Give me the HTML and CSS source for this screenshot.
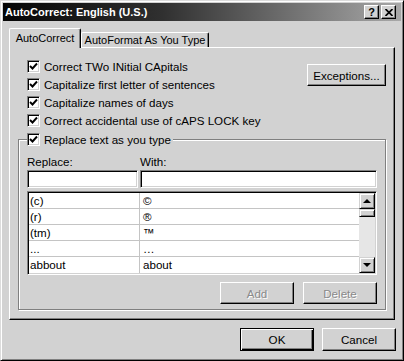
FILE: index.html
```html
<!DOCTYPE html>
<html>
<head>
    <title>AutoCorrect: English (U.S.)</title>
    <link rel="stylesheet" href="styles.css">
</head>
<body>
    <div class="window">
        <div class="titlebar">
            <span class="title">AutoCorrect: English (U.S.)</span>
            <div class="caption-buttons">
                <span class="caption-btn help">?</span>
                <span class="caption-btn">
                    <svg width="8" height="7" viewBox="0 0 8 7"><path d="M0.5 0 L7.5 7 M7.5 0 L0.5 7" stroke="#000" stroke-width="1.7"/></svg>
                </span>
            </div>
        </div>

        <div class="tabs">
            <div class="tab active">AutoCorrect</div>
            <div class="tab">AutoFormat As You Type</div>
        </div>

        <div class="panel">
            <div class="options">
                <div class="checks">
                    <div class="check"><span class="box"><svg width="9" height="9" viewBox="0 0 9 9"><polyline points="1,4 3.5,6.5 8,1.5" fill="none" stroke="#000" stroke-width="1.9"/></svg></span>Correct TWo INitial CApitals</div>
                    <div class="check"><span class="box"><svg width="9" height="9" viewBox="0 0 9 9"><polyline points="1,4 3.5,6.5 8,1.5" fill="none" stroke="#000" stroke-width="1.9"/></svg></span>Capitalize first letter of sentences</div>
                    <div class="check"><span class="box"><svg width="9" height="9" viewBox="0 0 9 9"><polyline points="1,4 3.5,6.5 8,1.5" fill="none" stroke="#000" stroke-width="1.9"/></svg></span>Capitalize names of days</div>
                    <div class="check"><span class="box"><svg width="9" height="9" viewBox="0 0 9 9"><polyline points="1,4 3.5,6.5 8,1.5" fill="none" stroke="#000" stroke-width="1.9"/></svg></span>Correct accidental use of cAPS LOCK key</div>
                </div>
                <button class="btn exceptions">Exceptions...</button>
            </div>

            <fieldset class="group">
                <legend>
                    <div class="check"><span class="box"><svg width="9" height="9" viewBox="0 0 9 9"><polyline points="1,4 3.5,6.5 8,1.5" fill="none" stroke="#000" stroke-width="1.9"/></svg></span>Replace text as you type</div>
                </legend>

                <div class="fields">
                    <span class="field-label">Replace:</span>
                    <span class="field-label">With:</span>
                    <div class="input"></div>
                    <div class="input"></div>
                </div>

                <div class="list">
                    <div class="rows">
                        <div class="row"><span class="cell">(c)</span><span class="cell">©</span></div>
                        <div class="row"><span class="cell">(r)</span><span class="cell">®</span></div>
                        <div class="row"><span class="cell">(tm)</span><span class="cell">™</span></div>
                        <div class="row"><span class="cell">...</span><span class="cell">…</span></div>
                        <div class="row"><span class="cell">abbout</span><span class="cell">about</span></div>
                    </div>
                    <div class="scrollbar">
                        <span class="scroll-btn"><span class="arrow-up"></span></span>
                        <span class="thumb"></span>
                        <span class="track"></span>
                        <span class="scroll-btn"><span class="arrow-down"></span></span>
                    </div>
                </div>

                <div class="group-buttons">
                    <button class="btn" disabled>Add</button>
                    <button class="btn" disabled>Delete</button>
                </div>
            </fieldset>
        </div>

        <div class="footer">
            <button class="btn default">OK</button>
            <button class="btn">Cancel</button>
        </div>
    </div>
</body>
</html>
```

FILE: styles.css
```css
body {
    margin: 0;
    background: #d2d2d2;
    font-family: 'Liberation Sans', Arial, sans-serif;
    font-size: 11px;
    color: #000;
}

.window {
    width: 404px;
    height: 361px;
    box-sizing: border-box;
    border: 1px solid;
    border-color: #dcdcdc #000 #000 #dcdcdc;
    box-shadow: inset 1px 1px #fff, inset -1px -1px #808080;
    padding: 2px;
    background: #d2d2d2;
    display: flex;
    flex-direction: column;
}

.titlebar {
    height: 18px;
    background: linear-gradient(to right, #050505, #303030 40%, #a8a8a8);
    display: flex;
    align-items: center;
    justify-content: space-between;
    padding: 0 5px 0 2px;
}

.title {
    color: #fff;
    font-weight: bold;
    font-size: 11px;
}

.caption-buttons {
    display: flex;
    gap: 2px;
}

.caption-btn {
    width: 15px;
    height: 14px;
    box-sizing: border-box;
    background: #d2d2d2;
    border: 1px solid;
    border-color: #fff #000 #000 #fff;
    box-shadow: inset -1px -1px #808080;
    display: flex;
    align-items: center;
    justify-content: center;
}

.help {
    font-weight: bold;
    font-size: 11px;
    line-height: 1;
}

.tabs {
    display: flex;
    align-items: flex-end;
    margin: 7px 6px 0 6px;
    height: 19px;
}

.tab {
    box-sizing: border-box;
    width: 128px;
    height: 15px;
    border: 1px solid;
    border-bottom: none;
    border-color: #fff #000 #000 #fff;
    border-radius: 2px 2px 0 0;
    box-shadow: inset -1px 0 #808080;
    display: flex;
    align-items: center;
    justify-content: center;
    white-space: nowrap;
    font-size: 11px;
}

.tab.active {
    height: 20px;
    width: 72px;
    margin-bottom: -1px;
    position: relative;
    z-index: 1;
    background: #d2d2d2;
    padding-bottom: 2px;
}

.panel {
    height: 273px;
    box-sizing: border-box;
    margin: 0 6px;
    border: 1px solid;
    border-color: #fff #000 #000 #fff;
    box-shadow: inset -1px -1px #808080;
    padding: 9px 8px 0 8px;
    font-size: 11.6px;
}

.options {
    display: flex;
    justify-content: space-between;
    align-items: flex-start;
    padding-left: 9px;
    height: 73px;
}

.check {
    display: flex;
    align-items: center;
    height: 18px;
    white-space: nowrap;
}

.box {
    width: 13px;
    height: 13px;
    box-sizing: border-box;
    border: 1px solid;
    border-color: #808080 #fff #fff #808080;
    box-shadow: inset 1px 1px #000, inset -1px -1px #d2d2d2;
    background: #fff;
    margin-right: 4px;
    display: flex;
    align-items: center;
    justify-content: center;
}

.btn {
    font-family: inherit;
    font-size: 11.6px;
    color: #000;
    background: #d2d2d2;
    padding: 0;
    width: 74px;
    height: 22px;
    border: 1px solid;
    border-color: #fff #000 #000 #fff;
    box-shadow: inset -1px -1px #808080;
}

.btn:disabled {
    color: #8a8a8a;
    text-shadow: 1px 1px #fff;
}

.exceptions {
    width: 79px;
    margin-top: 7px;
}

.group {
    margin: 0;
    padding: 0 8px 5px 8px;
    border: 1px solid #808080;
    box-shadow: inset 1px 1px #fff, 1px 1px #fff;
}

.group legend {
    padding: 0 2px 0 0;
    background: #d2d2d2;
}

.fields {
    display: grid;
    grid-template-columns: 111px 1fr;
    column-gap: 2px;
    padding-top: 7px;
}

.field-label {
    height: 15px;
    line-height: 14px;
}

.input {
    height: 18px;
    box-sizing: border-box;
    background: #fff;
    border: 1px solid;
    border-color: #808080 #fff #fff #808080;
    box-shadow: inset 1px 1px #000, inset -1px -1px #d2d2d2;
}

.list {
    display: flex;
    margin-top: 3px;
    border: 1px solid;
    border-color: #808080 #fff #fff #808080;
    box-shadow: inset 1px 1px #000, inset -1px -1px #d2d2d2;
    padding: 1px;
    background: #fff;
}

.rows {
    flex: 1;
}

.row {
    display: grid;
    grid-template-columns: 111px 1fr;
    height: 16px;
    box-sizing: border-box;
    border-bottom: 1px solid #c4c4c4;
}

.row:last-child {
    border-bottom: none;
}

.cell {
    line-height: 15px;
    padding-left: 1px;
}

.cell:first-child {
    border-right: 1px solid #c4c4c4;
}

.cell + .cell {
    padding-left: 3px;
}

.scrollbar {
    width: 16px;
    display: flex;
    flex-direction: column;
}

.scroll-btn, .thumb {
    height: 16px;
    box-sizing: border-box;
    background: #d2d2d2;
    border: 1px solid;
    border-color: #d2d2d2 #000 #000 #d2d2d2;
    box-shadow: inset 1px 1px #fff, inset -1px -1px #808080;
    display: flex;
    align-items: center;
    justify-content: center;
}

.thumb {
    height: 8px;
}

.track {
    flex: 1;
    background: #e6e6e6;
}

.arrow-up {
    border: 4px solid transparent;
    border-top: none;
    border-bottom: 4px solid #000;
}

.arrow-down {
    border: 4px solid transparent;
    border-bottom: none;
    border-top: 4px solid #000;
}

.group-buttons {
    display: flex;
    justify-content: flex-end;
    gap: 9px;
    margin-top: 7px;
}

.footer {
    display: flex;
    justify-content: flex-end;
    gap: 8px;
    padding: 8px 5px 0 0;
}

.footer .btn {
    height: 23px;
}

.btn.default {
    border-color: #000;
    box-shadow: inset 1px 1px #fff, inset -1px -1px #000, inset -2px -2px #808080;
}
```
